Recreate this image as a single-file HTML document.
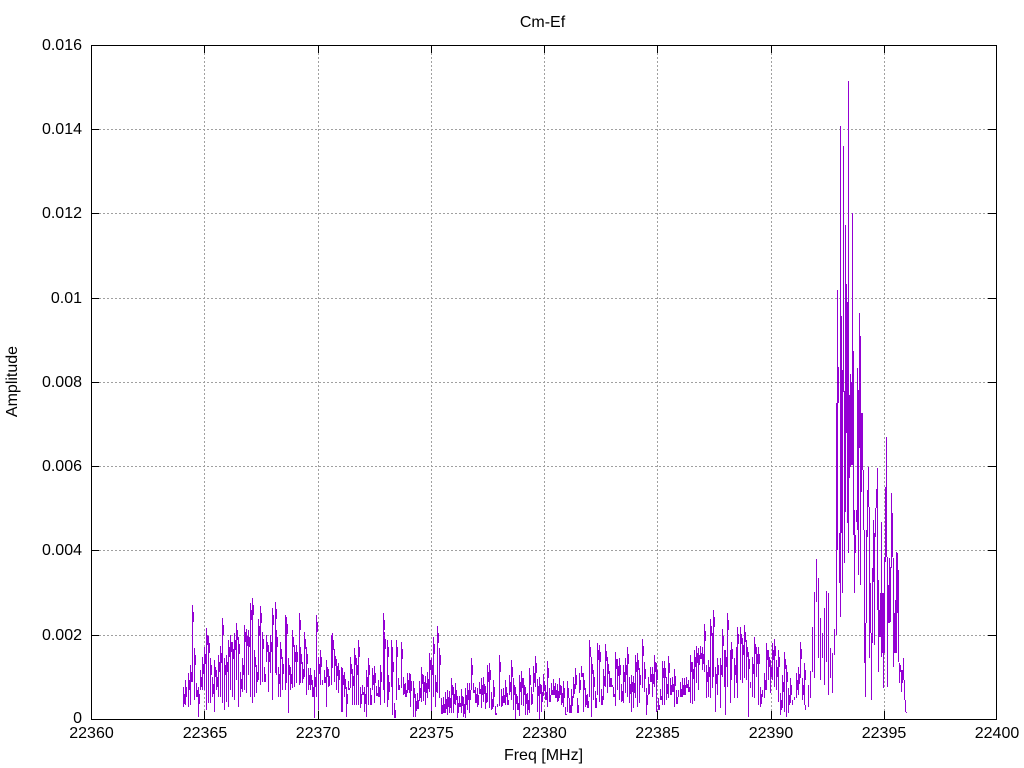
<!DOCTYPE html>
<html><head><meta charset="utf-8"><title>Cm-Ef</title>
<style>html,body{margin:0;padding:0;background:#fff}svg{display:block}text{font-family:"Liberation Sans",sans-serif;font-size:16px;fill:#000}</style></head>
<body>
<svg width="1024" height="768" viewBox="0 0 1024 768" xmlns="http://www.w3.org/2000/svg">
<rect width="1024" height="768" fill="#fff"/>
<g stroke="#a0a0a0" stroke-width="1" stroke-dasharray="2 2" fill="none" shape-rendering="crispEdges">
<path d="M99 635.5H988M99 550.5H988M99 466.5H988M99 382.5H988M99 298.5H988M99 213.5H988M99 129.5H988"/>
<path d="M204.5 711V53M318.5 711V53M431.5 711V53M544.5 711V53M657.5 711V53M771.5 711V53M884.5 711V53"/>
</g>
<g fill="none" stroke="#9400d3" stroke-width="1" shape-rendering="crispEdges">
<g id="d">
<path d="M183.5 687V707M185.5 680V705M188.5 673V707M190.5 665V705M192.5 605V682M194.5 648V700M196.5 683V697M198.5 687V717M200.5 670V690M202.5 657V690M204.5 647V690M206.5 628V710M208.5 636V703M210.5 658V703M212.5 677V697M214.5 660V712M216.5 670V690M218.5 655V697M220.5 646V697M222.5 618V703M224.5 658V710M226.5 655V702M228.5 640V707M230.5 635V690M232.5 642V697M234.5 633V700M236.5 623V680M238.5 637V707M240.5 672V697M242.5 658V692M244.5 625V690M246.5 629V693M248.5 630V675M250.5 603V697M252.5 598V703M254.5 650V697M256.5 665V693M258.5 619V680M260.5 606V685M262.5 632V682M264.5 667V682M266.5 635V662M268.5 645V692M270.5 635V673M272.5 608V700M275.5 602V673M276.5 630V675M278.5 667V697M280.5 642V697M282.5 657V690M285.5 615V690M286.5 617V683M288.5 658V713M290.5 667V690M292.5 630V688M294.5 645V687M296.5 645V683M299.5 613V685M300.5 647V683M302.5 662V683M304.5 632V677M306.5 647V695M308.5 668V690M310.5 668V690M312.5 680V697M314.5 670V718M316.5 615V697M318.5 657V710M320.5 650V685M322.5 680V685M324.5 670V683M326.5 660V707M328.5 669V687M331.5 635V685M332.5 633V668M334.5 649V682M336.5 659V690M338.5 663V693M341.5 667V712M342.5 668V712M344.5 672V697M346.5 687V717M348.5 681V690M350.5 657V688M352.5 669V705M354.5 648V705M356.5 658V705M358.5 640V705M360.5 687V708M362.5 685V695M364.5 687V712M366.5 670V717M368.5 658V705M370.5 688V705M372.5 668V690M374.5 666V703M376.5 686V696M378.5 680V697M380.5 665V705M383.5 613V690M384.5 632V703M387.5 640V707M388.5 675V700M391.5 640V687M392.5 655V715M394.5 703V718M396.5 640V700M398.5 678V690M401.5 642V688M403.5 677V695M405.5 683V697M407.5 673V693M409.5 673V693"/>
<path d="M410.5 674V707M413.5 681V717M415.5 694V717M417.5 693V709M419.5 681V701M421.5 667V702M423.5 675V701M425.5 676V705M427.5 672V698M429.5 653V692M431.5 658V712M433.5 637V697M435.5 675V707M437.5 626V693M439.5 648V698M441.5 698V714M443.5 697V713M445.5 692V713M447.5 690V715M449.5 691V713M451.5 678V713M453.5 687V713M455.5 683V705M457.5 696V718M459.5 696V707M461.5 689V713M463.5 697V717M465.5 688V718M467.5 683V710M469.5 683V713M471.5 658V690M473.5 683V693M475.5 687V703M477.5 688V707M479.5 682V694M481.5 678V708M483.5 677V702M485.5 686V709M487.5 665V702M489.5 663V708M491.5 692V710M493.5 680V707M495.5 706V715M497.5 704V707M499.5 655V706M501.5 689V707M503.5 688V703M505.5 680V705M507.5 693V705M509.5 675V695M511.5 660V700M513.5 678V710M515.5 687V719M517.5 696V710M519.5 675V716M521.5 671V705M523.5 678V706M525.5 687V715M527.5 693V715M529.5 668V713M531.5 687V705M533.5 666V692M535.5 656V687M537.5 679V712M539.5 677V719M541.5 685V712M543.5 674V696M545.5 685V700M547.5 661V707M549.5 688V702M551.5 683V695M553.5 679V695M555.5 683V698M557.5 684V702M559.5 678V698M561.5 686V705M563.5 681V707M565.5 707V715M567.5 681V712M569.5 698V713M571.5 689V713M573.5 677V698M575.5 668V689M577.5 698V713M579.5 673V693M581.5 666V677M583.5 673V712M585.5 688V707M587.5 694V708M589.5 640V697M591.5 657V717M593.5 670V700M595.5 691V708M597.5 643V695M599.5 645V702M601.5 689V705M603.5 669V700M605.5 644V687M607.5 657V693M609.5 671V687M611.5 678V687M613.5 687V697M615.5 652V706M617.5 659V690M619.5 658V700M621.5 684V702M623.5 665V703M625.5 658V693M627.5 647V697M629.5 677V703M631.5 675V712M633.5 676V708M635.5 655V698M637.5 653V707M639.5 668V703M642.5 639V688M644.5 662V692M646.5 688V715M648.5 677V695M650.5 667V682M652.5 667V697M654.5 655V687M656.5 663V712M658.5 698V710M660.5 689V700"/>
<path d="M662.5 661V705M664.5 661V705M666.5 677V700M668.5 656V698M670.5 678V695M672.5 677V692M674.5 669V707M676.5 690V704M678.5 690V697M680.5 682V697M682.5 678V697M684.5 678V695M686.5 677V688M688.5 680V692M690.5 655V703M692.5 662V704M694.5 650V701M696.5 646V683M698.5 648V690M700.5 646V659M702.5 647V670M704.5 624V672M706.5 665V698M708.5 660V697M710.5 619V698M712.5 633V688M713.5 610V677M715.5 667V712M717.5 658V695M720.5 658V708M722.5 629V677M724.5 650V687M725.5 650V715M727.5 613V687M730.5 650V703M731.5 642V680M734.5 658V698M736.5 647V683M737.5 627V698M740.5 627V680M742.5 638V683M744.5 625V678M746.5 640V680M748.5 652V717M750.5 682V688M752.5 657V697M754.5 637V698M756.5 647V677M758.5 647V705M760.5 687V707M762.5 690V697M764.5 673V698M766.5 643V690M768.5 650V680M770.5 660V693M772.5 643V680M774.5 639V687M776.5 660V690M778.5 650V702M780.5 693V715M782.5 675V708M784.5 652V712M786.5 665V717M788.5 688V713M790.5 678V703M792.5 700V705M794.5 697V700M796.5 673V698M798.5 667V695M800.5 642V678M802.5 678V700M804.5 663V705"/>
</g>
<use href="#d" x="1" stroke-dasharray="0 7 10 999"/>
<path d="M805.5 705V710M808.5 685V707M810.5 671V698M812.5 627V672M814.5 592V678M816.5 559V602M818.5 578V658M820.5 618V680M822.5 633V658M824.5 608V685M826.5 591V662M828.5 593V695M830.5 648V678M832.5 653V693M834.5 629V655M836.5 403V635M837.5 290V550M838.5 367V403M839.5 533V583M840.5 126V617M841.5 316V533M842.5 370V593M843.5 146V392M844.5 391V563M845.5 225V512M846.5 284V433M847.5 302V523M848.5 81V553M849.5 395V478M850.5 374V467M851.5 382V465M852.5 213V465M853.5 351V535M854.5 510V593M855.5 535V553M856.5 510V522M857.5 368V530M858.5 390V575M859.5 313V448M860.5 336V585M861.5 413V492M862.5 413V470M863.5 470V530M864.5 530V663M865.5 623V697M866.5 530V623M867.5 490V537M868.5 467V507M869.5 507V658M870.5 583V633M871.5 633V700M872.5 568V643M873.5 520V582M874.5 533V645M875.5 508V537M876.5 489V508M877.5 468V610M878.5 580V672M879.5 610V637M880.5 593V637M881.5 522V657M882.5 593V653M883.5 593V688M884.5 557V653M885.5 487V562M886.5 437V557M887.5 557V687M888.5 585V623M889.5 558V623M890.5 567V622M891.5 493V568M892.5 513V557M893.5 558V667M894.5 613V653M895.5 600V653M896.5 552V653M897.5 553V613M898.5 570V662M899.5 663V683M900.5 665V672M901.5 670V692M902.5 670V683M903.5 658V680M904.5 680V700M905.5 700V712M906.5 712V713"/>
</g>
<g stroke="#000" stroke-width="1" fill="none" shape-rendering="crispEdges">
<path d="M91.5 45.5H996.5V719.5H91.5Z"/>
<path d="M91 635.5h8M91 550.5h8M91 466.5h8M91 382.5h8M91 298.5h8M91 213.5h8M91 129.5h8M996 635.5h-8M996 550.5h-8M996 466.5h-8M996 382.5h-8M996 298.5h-8M996 213.5h-8M996 129.5h-8"/>
<path d="M204.5 719v-8M318.5 719v-8M431.5 719v-8M544.5 719v-8M657.5 719v-8M771.5 719v-8M884.5 719v-8M204.5 45v8M318.5 45v8M431.5 45v8M544.5 45v8M657.5 45v8M771.5 45v8M884.5 45v8"/>
</g>
<text x="542.5" y="27" text-anchor="middle">Cm-Ef</text>
<g text-anchor="end">
<text x="82" y="50">0.016</text>
<text x="82" y="134">0.014</text>
<text x="82" y="218">0.012</text>
<text x="82" y="303">0.01</text>
<text x="82" y="387">0.008</text>
<text x="82" y="471">0.006</text>
<text x="82" y="555">0.004</text>
<text x="82" y="640">0.002</text>
<text x="82" y="723">0</text>
</g>
<g text-anchor="middle">
<text x="91.5" y="738">22360</text>
<text x="205" y="738">22365</text>
<text x="318" y="738">22370</text>
<text x="431.5" y="738">22375</text>
<text x="544.5" y="738">22380</text>
<text x="657.5" y="738">22385</text>
<text x="771" y="738">22390</text>
<text x="884" y="738">22395</text>
<text x="997" y="738">22400</text>
<text x="543.5" y="760">Freq [MHz]</text>
</g>
<text transform="translate(17 381.5) rotate(-90)" text-anchor="middle">Amplitude</text>
</svg>
</body></html>
